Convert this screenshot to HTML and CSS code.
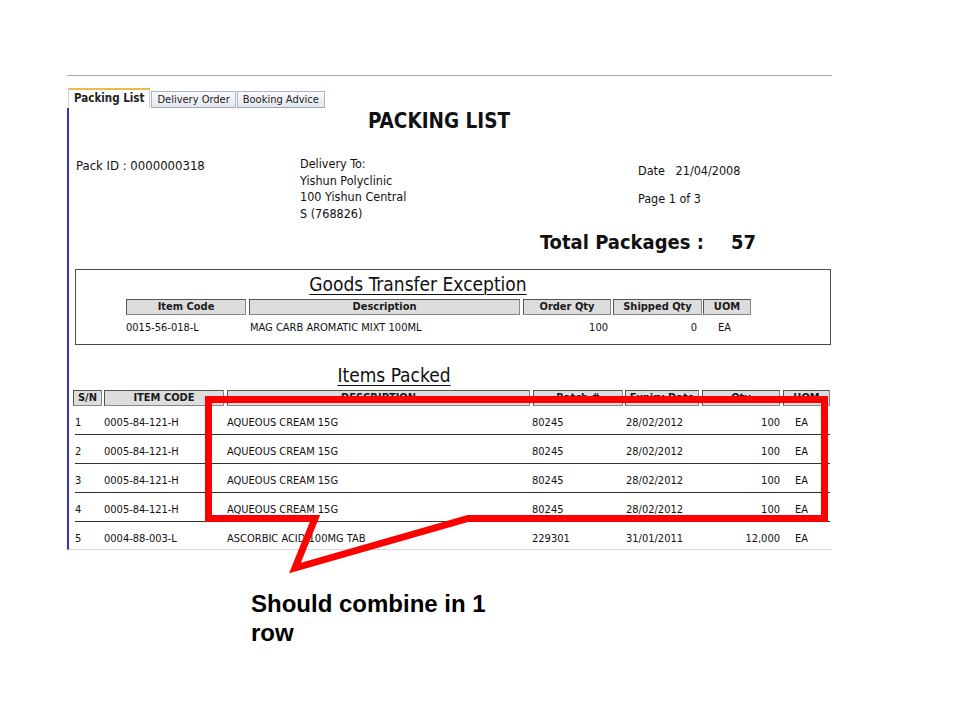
FILE: index.html
```html
<!DOCTYPE html>
<html>
<head>
<meta charset="utf-8">
<title>Packing List</title>
<link rel="stylesheet" href="styles.css">
</head>
<body>
<div class="slide">
  <div class="doc">
    <div class="tabs">
      <div class="tab active">Packing List</div>
      <div class="tab">Delivery Order</div>
      <div class="tab">Booking Advice</div>
    </div>
    <div class="panel">
      <h1 class="title">PACKING LIST</h1>
      <div class="info">
        <div class="pack-id">Pack ID : 0000000318</div>
        <div class="deliver">Delivery To:<br>Yishun Polyclinic<br>100 Yishun Central<br>S (768826)</div>
        <div class="meta">
          <div class="date">Date   21/04/2008</div>
          <div class="page">Page 1 of 3</div>
        </div>
      </div>
      <div class="total"><span class="total-label">Total Packages :</span><span>57</span></div>

      <div class="exception">
        <h2 class="sec-title ex-title">Goods Transfer Exception</h2>
        <div class="ex-line">
          <div class="hcell c-code">Item Code</div>
          <div class="hcell c-desc">Description</div>
          <div class="hcell c-oqty">Order Qty</div>
          <div class="hcell c-sqty">Shipped Qty</div>
          <div class="hcell c-uom">UOM</div>
        </div>
        <div class="ex-line ex-data">
          <div class="c-code">0015-56-018-L</div>
          <div class="c-desc">MAG CARB AROMATIC MIXT 100ML</div>
          <div class="c-oqty num">100</div>
          <div class="c-sqty num">0</div>
          <div class="c-uom">EA</div>
        </div>
      </div>

      <h2 class="sec-title items-title">Items Packed</h2>
      <div class="it-head">
        <div class="hcell h-sn">S/N</div>
        <div class="hcell h-code">ITEM CODE</div>
        <div class="hcell h-desc">DESCRIPTION</div>
        <div class="hcell h-batch">Batch #</div>
        <div class="hcell h-exp">Expiry Date</div>
        <div class="hcell h-qty">Qty</div>
        <div class="hcell h-uom">UOM</div>
      </div>
      <div class="it-row"><span>1</span><span>0005-84-121-H</span><span>AQUEOUS CREAM 15G</span><span>80245</span><span>28/02/2012</span><span class="num">100</span><span class="uom">EA</span></div>
      <div class="it-row"><span>2</span><span>0005-84-121-H</span><span>AQUEOUS CREAM 15G</span><span>80245</span><span>28/02/2012</span><span class="num">100</span><span class="uom">EA</span></div>
      <div class="it-row"><span>3</span><span>0005-84-121-H</span><span>AQUEOUS CREAM 15G</span><span>80245</span><span>28/02/2012</span><span class="num">100</span><span class="uom">EA</span></div>
      <div class="it-row"><span>4</span><span>0005-84-121-H</span><span>AQUEOUS CREAM 15G</span><span>80245</span><span>28/02/2012</span><span class="num">100</span><span class="uom">EA</span></div>
      <div class="it-row last"><span>5</span><span>0004-88-003-L</span><span>ASCORBIC ACID 100MG TAB</span><span>229301</span><span>31/01/2011</span><span class="num">12,000</span><span class="uom">EA</span></div>
    </div>
  </div>

  <p class="note">Should combine in 1 row</p>

  <svg class="callout" width="960" height="720" viewBox="0 0 960 720" aria-hidden="true">
    <polygon points="208.5,399.5 824.5,399.5 824.5,518.5 468,518.5 295,568 315,518.5 208.5,518.5" fill="none" stroke="#ff0000" stroke-width="7" stroke-linejoin="miter"/>
  </svg>
</div>
</body>
</html>
```

FILE: styles.css
```css
* { box-sizing: border-box; }

html, body {
  margin: 0;
  padding: 0;
  background: #ffffff;
}

.slide {
  position: relative;
  width: 960px;
  height: 720px;
  overflow: hidden;
  padding-top: 75px;
  font-family: "DejaVu Sans Condensed", "DejaVu Sans", sans-serif;
  color: #111;
}

.doc {
  margin-left: 67px;
  width: 765px;
  border-top: 1px solid #a9a9a9;
}

/* tabs */
.tabs {
  display: flex;
  align-items: flex-end;
  padding-top: 12px;
  padding-left: 1px;
  height: 32px;
}

.tab {
  height: 17px;
  line-height: 15px;
  font-size: 11px;
  padding: 0 5px;
  border: 1px solid #a6b4cc;
  border-bottom: 1px solid #9aa6bd;
  background: linear-gradient(#fbfbfd, #e4e6ee);
  margin-right: 1px;
  color: #222;
  white-space: nowrap;
}

.tab.active {
  height: 20px;
  line-height: 17px;
  font-size: 11.5px;
  font-weight: bold;
  background: #ffffff;
  border-top: 2px solid #f2b84b;
  border-bottom: none;
  border-left: 1px solid #c7cfdc;
  border-right: 1px solid #c7cfdc;
  padding: 0 5px;
}

/* panel */
.panel {
  border-left: 2px solid #3434c4;
  border-bottom: 1px solid #d6d6d6;
  font-size: 12.5px;
}

.title {
  margin: 0;
  padding-top: 1px;
  padding-right: 23px;
  height: 25px;
  line-height: 24px;
  font-size: 20.5px;
  font-weight: bold;
  text-align: center;
}

.info {
  display: grid;
  grid-template-columns: 224px 338px 1fr;
  padding-left: 7px;
  margin-top: 23px;
  height: 66px;
  line-height: 16.5px;
}

.pack-id { padding-top: 2px; font-size: 13px; }

.meta { padding-top: 7px; }
.date { white-space: pre; }
.page { margin-top: 11.5px; }

.total {
  display: flex;
  padding-left: 471px;
  margin-top: 8px;
  height: 24px;
  line-height: 24px;
  font-size: 20px;
  font-weight: bold;
}

.total-label {
  width: 191px;
  white-space: nowrap;
}

/* goods transfer exception */
.exception {
  margin-top: 15px;
  margin-left: 6px;
  width: 756px;
  border: 1px solid #4a4a4a;
  padding: 3px 0 8px 50px;
  font-size: 11px;
}

.sec-title {
  margin: 0;
  font-weight: normal;
  font-size: 19px;
  line-height: 22px;
  height: 22px;
  text-decoration: underline;
  text-decoration-thickness: 1px;
  text-underline-offset: 3px;
  text-align: center;
}

.ex-title {
  margin-left: -50px;
  padding-right: 70px;
  margin-bottom: 4px;
}

.ex-line {
  display: flex;
  height: 16px;
  line-height: 14px;
}

.ex-data {
  margin-top: 5px;
  line-height: 16px;
}

.hcell {
  background: #dddddd;
  border: 1px solid #555555;
  border-right-color: #888;
  border-bottom-color: #888;
  font-weight: bold;
  text-align: center;
  color: #1a1a1a;
  white-space: nowrap;
  overflow: hidden;
}

.c-code { width: 120px; margin-right: 3px; }
.c-desc { width: 271px; margin-right: 3px; }
.c-oqty { width: 88px; margin-right: 2px; }
.c-sqty { width: 89px; margin-right: 1px; }
.c-uom  { width: 48px; }

.ex-data .c-desc { padding-left: 1px; }
.ex-data .c-oqty { text-align: right; padding-right: 3px; }
.ex-data .c-sqty { text-align: right; padding-right: 5px; }
.ex-data .c-uom { padding-left: 15px; }

/* items packed */
.items-title {
  margin-top: 19px;
  padding-right: 113px;
  margin-bottom: 4px;
}

.it-head {
  display: flex;
  margin-left: 4px;
  height: 16px;
  line-height: 14px;
  font-size: 11px;
}

.h-sn    { width: 29px; margin-right: 2px; }
.h-code  { width: 120px; margin-right: 3px; }
.h-desc  { width: 303px; margin-right: 3px; }
.h-batch { width: 90px; margin-right: 2px; }
.h-exp   { width: 74px; margin-right: 3px; }
.h-qty   { width: 78px; margin-right: 3px; }
.h-uom   { width: 47px; }

.it-row {
  display: grid;
  grid-template-columns: 29px 123px 305px 94px 76px 78px 1fr;
  margin-left: 6px;
  width: 755px;
  height: 29px;
  padding-top: 9px;
  line-height: 16px;
  font-size: 11px;
  border-bottom: 1px solid #333333;
  white-space: nowrap;
}

.it-row.last {
  height: 27px;
  border-bottom: none;
}

.it-row .num { text-align: right; }
.it-row .uom { padding-left: 15px; }

/* annotation */
.note {
  margin: 39px 0 0 251px;
  width: 250px;
  font-family: "Liberation Sans", Arial, sans-serif;
  font-weight: bold;
  font-size: 24px;
  line-height: 29px;
  color: #000;
}

.callout {
  position: absolute;
  left: 0;
  top: 0;
  pointer-events: none;
}
```
